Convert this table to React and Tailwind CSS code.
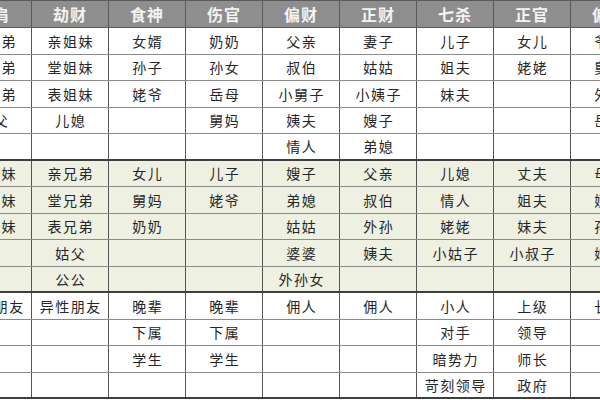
import React from "react";

const headers = ["比肩", "劫财", "食神", "伤官", "偏财", "正财", "七杀", "正官", "偏印"];

const sections = [
  {
    bg: "bg-white",
    rows: [
      ["亲兄弟", "亲姐妹", "女婿", "奶奶", "父亲", "妻子", "儿子", "女儿", "爷爷"],
      ["堂兄弟", "堂姐妹", "孙子", "孙女", "叔伯", "姑姑", "姐夫", "姥姥", "舅舅"],
      ["表兄弟", "表姐妹", "姥爷", "岳母", "小舅子", "小姨子", "妹夫", "", "外公"],
      ["伯父", "儿媳", "", "舅妈", "姨夫", "嫂子", "", "", "岳父"],
      ["", "", "", "", "情人", "弟媳", "", "", ""],
    ],
  },
  {
    bg: "bg-[#eef0e1]",
    rows: [
      ["亲姐妹", "亲兄弟", "女儿", "儿子", "嫂子", "父亲", "儿媳", "丈夫", "母亲"],
      ["堂姐妹", "堂兄弟", "舅妈", "姥爷", "弟媳", "叔伯", "情人", "姐夫", "姨妈"],
      ["表姐妹", "表兄弟", "奶奶", "", "姑姑", "外孙", "姥姥", "妹夫", "孙子"],
      ["", "姑父", "", "", "婆婆", "姨夫", "小姑子", "小叔子", "婶婶"],
      ["", "公公", "", "", "外孙女", "", "", "", ""],
    ],
  },
  {
    bg: "bg-white",
    rows: [
      ["同性朋友", "异性朋友", "晚辈", "晚辈", "佣人", "佣人", "小人", "上级", "长辈"],
      ["", "", "下属", "下属", "", "", "对手", "领导", ""],
      ["", "", "学生", "学生", "", "", "暗势力", "师长", ""],
      ["", "", "", "", "", "", "苛刻领导", "政府", ""],
    ],
  },
];

const font = { fontFamily: '"Noto Sans CJK SC", "Noto Sans", sans-serif' };

export default function App() {
  return (
    <div className="w-[600px] h-[400px] overflow-hidden bg-white" style={font}>
      <div className="ml-[-45px] w-[693px]">
        <div className="grid grid-cols-[repeat(9,77px)] h-[28px] bg-[#8e8e8e] border-t border-b border-[#5a5a5a]">
          {headers.map((h, i) => (
            <div
              key={i}
              className="flex items-center justify-center border-r border-[#5a5a5a] text-[16px] font-bold text-[#f3f3f3] tracking-[1px] leading-none"
            >
              {h}
            </div>
          ))}
        </div>
        {sections.map((sec, si) => (
          <div key={si} className={sec.bg}>
            {sec.rows.map((row, ri) => {
              const last = ri === sec.rows.length - 1;
              return (
                <div
                  key={ri}
                  className={
                    "grid grid-cols-[repeat(9,77px)] h-[26.5px] " +
                    (last ? "border-b-2 border-[#3f3f3f]" : "border-b border-[#8a8a8a]")
                  }
                >
                  {row.map((c, ci) => (
                    <div
                      key={ci}
                      className="flex items-center justify-center border-r border-[#555555] text-[14px] text-[#262626] tracking-[1.5px] pl-[1.5px] leading-none whitespace-nowrap"
                    >
                      {c}
                    </div>
                  ))}
                </div>
              );
            })}
          </div>
        ))}
      </div>
    </div>
  );
}
